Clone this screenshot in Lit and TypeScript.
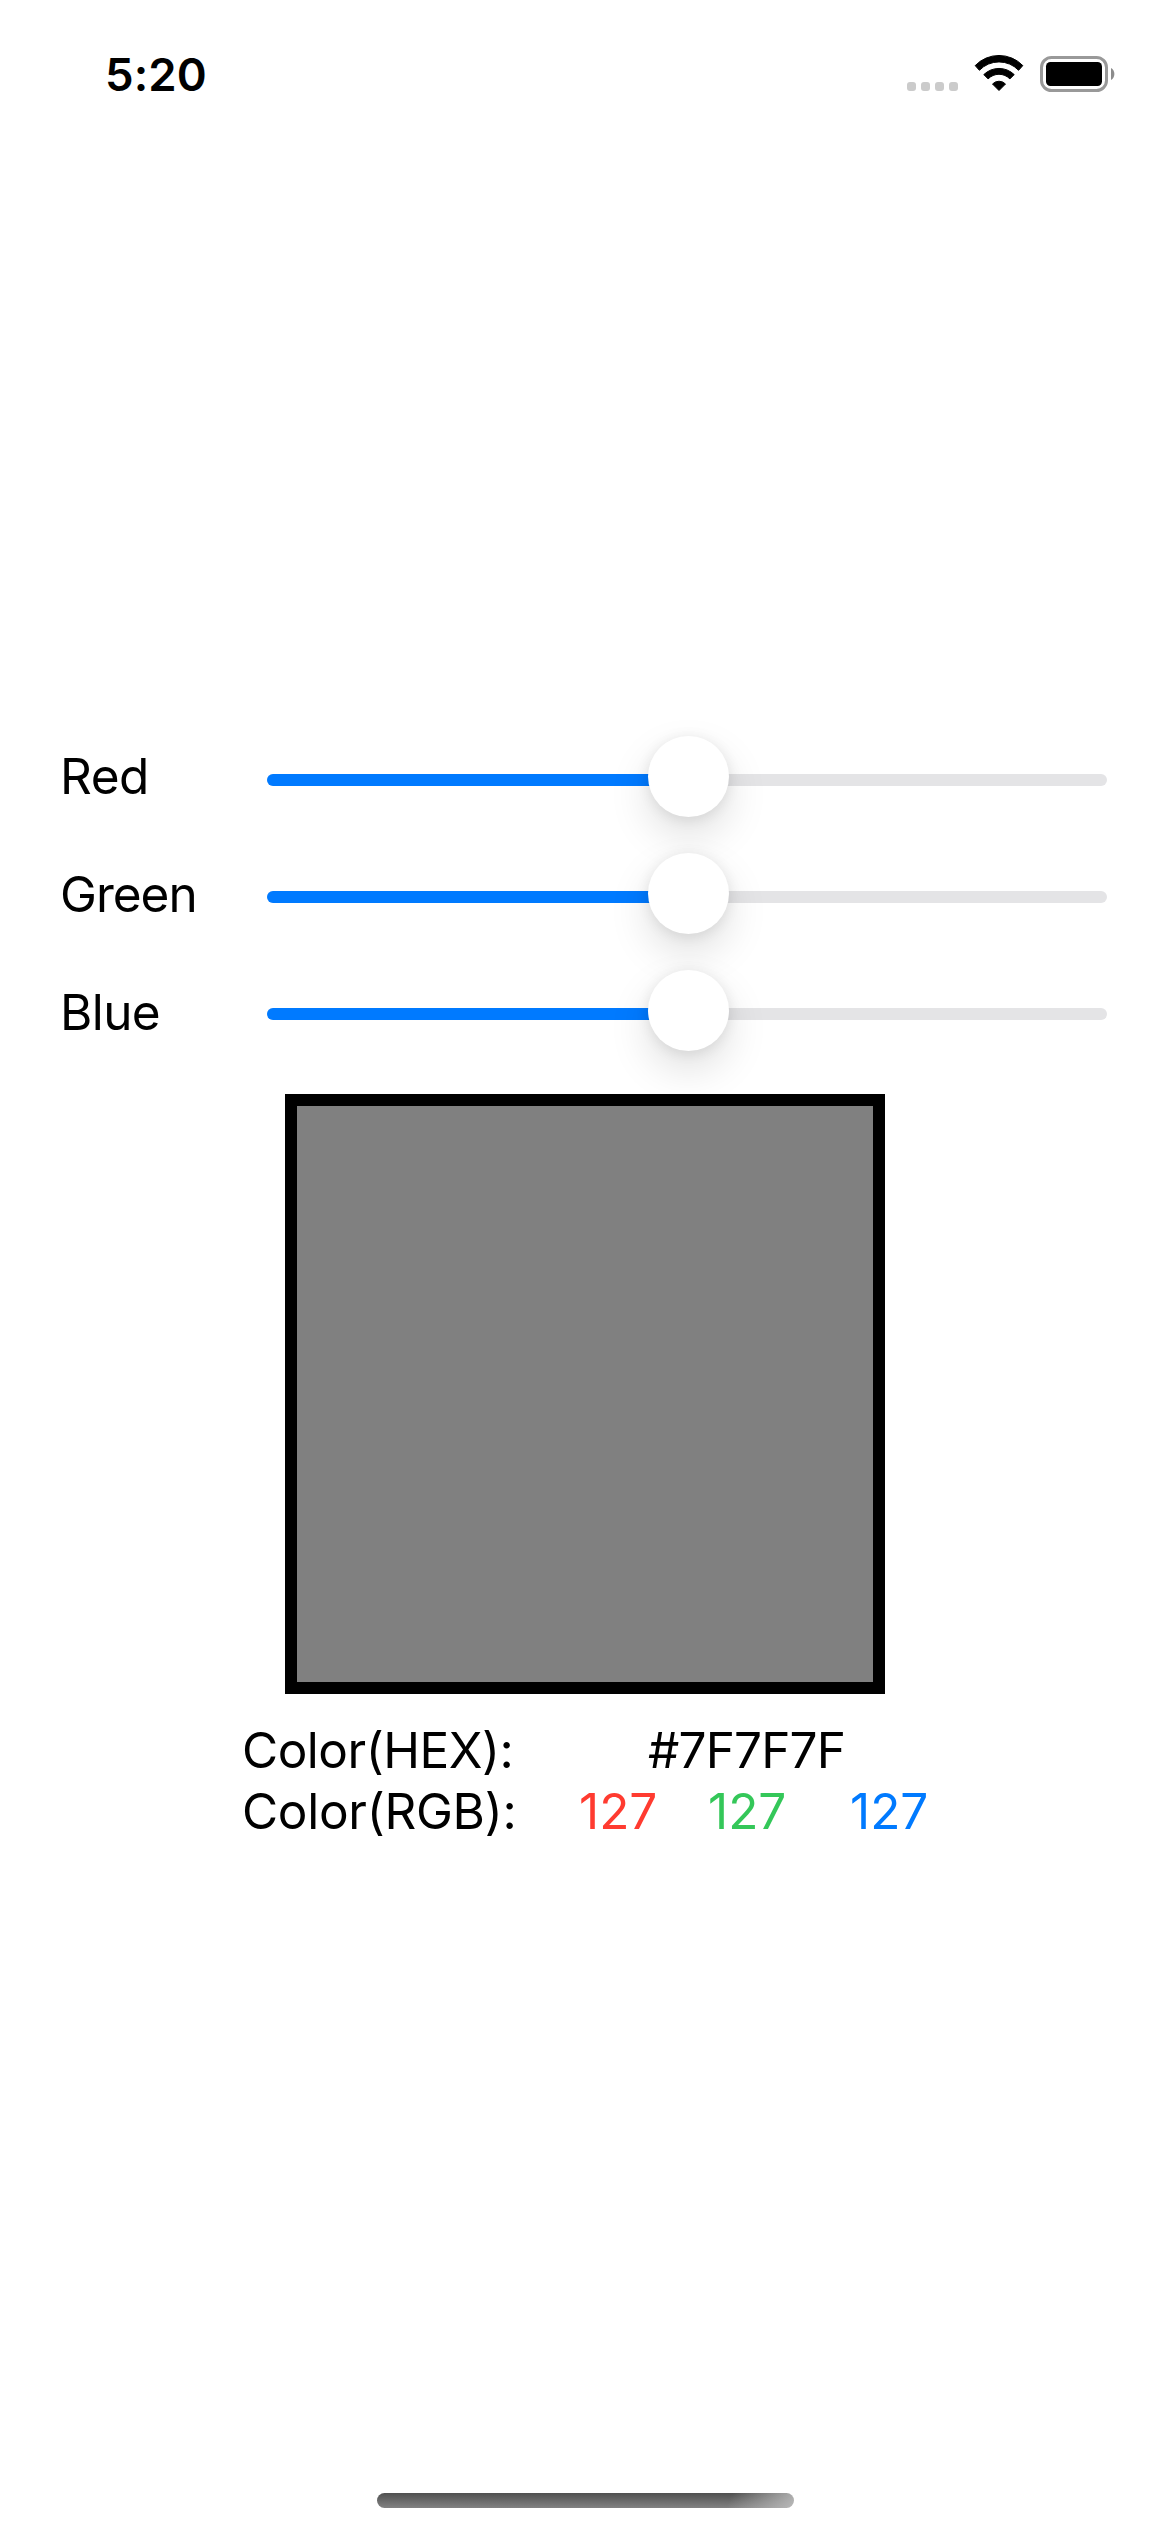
import { LitElement, html, css } from "lit";
import { customElement, property, state } from "lit/decorators.js";
import { styleMap } from "lit/directives/style-map.js";

@customElement("status-bar")
export class StatusBar extends LitElement {
  static styles = css`
    :host {
      display: flex;
      justify-content: space-between;
      height: 141px;
      padding: 47px 55px 0 105px;
      box-sizing: border-box;
    }
    .time {
      font-size: 45.5px;
      font-weight: 600;
      line-height: 55px;
      letter-spacing: 0.1px;
    }
    .icons {
      display: flex;
      align-items: flex-start;
    }
    .dots {
      display: flex;
      gap: 5px;
      padding-top: 35px;
      margin-right: 16px;
    }
    .dot {
      width: 9px;
      height: 9px;
      border-radius: 3px;
      background: #cbcbcb;
    }
    svg {
      display: block;
    }
    .wifi {
      margin: 7px 16px 0 0;
    }
    .battery {
      margin-top: 9px;
    }
  `;

  render() {
    return html`
      <div class="time">5:20</div>
      <div class="icons">
        <div class="dots">
          <div class="dot"></div>
          <div class="dot"></div>
          <div class="dot"></div>
          <div class="dot"></div>
        </div>
        <svg class="wifi" width="50" height="38" viewBox="0 0 50 38">
          <g stroke="#000" stroke-width="1" stroke-linejoin="round">
            <path d="M1.2 11.6A33 33 0 0 1 48.8 11.6L44.6 16.3A27.1 27.1 0 0 0 5.4 16.3Z" />
            <path d="M9.8 20.6A21.8 21.8 0 0 1 40.2 20.6L35.9 24.9A15.2 15.2 0 0 0 14.1 24.9Z" />
            <path d="M18.5 30A9 9 0 0 1 31.5 30L25 36.5Z" />
          </g>
        </svg>
        <svg class="battery" width="75" height="36" viewBox="0 0 75 36">
          <rect x="1.5" y="1.5" width="65" height="33" rx="10" fill="none" stroke="#999" stroke-width="3" />
          <rect x="6" y="6" width="56" height="24" rx="4.5" />
          <path d="M71 12A7 7 0 0 1 71 24Z" fill="#8c8c8c" />
        </svg>
      </div>
    `;
  }
}

@customElement("color-slider")
export class ColorSlider extends LitElement {
  @property({ type: Number }) value = 127;

  static styles = css`
    :host {
      display: block;
      width: 840px;
      padding-top: 33px;
    }
    .track {
      position: relative;
      height: 12px;
      border-radius: 6px;
      background: #e4e4e6;
    }
    .fill {
      height: 12px;
      border-radius: 6px;
      background: #007aff;
    }
    .rail {
      position: absolute;
      top: -38px;
      left: 0;
      right: 81px;
      height: 81px;
    }
    .thumb {
      position: absolute;
      width: 81px;
      height: 81px;
      border-radius: 50%;
      background: #fff;
      box-shadow: 0 18px 42px rgba(0, 0, 0, 0.13), 0 2px 14px rgba(0, 0, 0, 0.09);
    }
  `;

  render() {
    const portion = this.value / 254;
    return html`
      <div class="track">
        <div class="fill" style=${styleMap({ width: `${portion * 100}%` })}></div>
        <div class="rail">
          <div class="thumb" style=${styleMap({ left: `calc(${portion * 100}% + 1.5px)` })}></div>
        </div>
      </div>
    `;
  }
}

@customElement("app-root")
export class AppRoot extends LitElement {
  @state() private red = 127;
  @state() private green = 127;
  @state() private blue = 127;

  static styles = css`
    :host {
      display: flex;
      flex-direction: column;
      width: 1170px;
      height: 2532px;
      box-sizing: border-box;
      background: #fff;
      color: #000;
      overflow: hidden;
      font-family: Inter, "Liberation Sans", sans-serif;
      font-size: 49.5px;
      line-height: 60px;
      font-kerning: normal;
    }
    .sliders {
      display: grid;
      grid-template-columns: 207px 840px;
      grid-auto-rows: 117px;
      padding: 600px 0 0 60px;
    }
    .label {
      padding-top: 5px;
    }
    .red-label {
      letter-spacing: -0.5px;
    }
    .green-label {
      padding-top: 6px;
      letter-spacing: -1px;
    }
    .blue-label {
      padding-top: 7px;
      letter-spacing: -0.6px;
    }
    .swatch {
      align-self: center;
      box-sizing: border-box;
      width: 600px;
      height: 600px;
      margin-top: 2px;
      border: 12px solid #000;
    }
    .readout {
      display: grid;
      grid-template-columns: 337px 1fr;
      grid-auto-rows: 61px;
      padding: 26px 0 0 242px;
    }
    .hex-label {
      letter-spacing: -0.5px;
    }
    .rgb-label {
      letter-spacing: -0.3px;
    }
    .hex {
      padding-left: 69px;
      letter-spacing: -0.85px;
    }
    .rgb {
      display: flex;
    }
    .r {
      width: 129px;
      color: #ff3b30;
    }
    .g {
      width: 142px;
      color: #34c759;
    }
    .b {
      color: #007aff;
    }
    .home {
      width: 417px;
      height: 15px;
      margin: auto auto 24px 377px;
      border-radius: 7.5px;
      background: linear-gradient(112deg, rgba(190, 190, 190, 0) 84%, rgba(190, 190, 190, 0.9) 100%),
        linear-gradient(#505050, #828282);
    }
  `;

  render() {
    const rgb = [this.red, this.green, this.blue];
    const hex = rgb.map((n) => n.toString(16).padStart(2, "0").toUpperCase()).join("");
    return html`
      <status-bar></status-bar>
      <div class="sliders">
        <div class="label red-label">Red</div>
        <color-slider .value=${this.red}></color-slider>
        <div class="label green-label">Green</div>
        <color-slider .value=${this.green}></color-slider>
        <div class="label blue-label">Blue</div>
        <color-slider .value=${this.blue}></color-slider>
      </div>
      <div class="swatch" style=${styleMap({ background: `rgb(${rgb.map((n) => n + 1).join(",")})` })}></div>
      <div class="readout">
        <div class="hex-label">Color(HEX):</div>
        <div class="hex">#${hex}</div>
        <div class="rgb-label">Color(RGB):</div>
        <div class="rgb">
          <span class="r">${this.red}</span>
          <span class="g">${this.green}</span>
          <span class="b">${this.blue}</span>
        </div>
      </div>
      <div class="home"></div>
    `;
  }
}
